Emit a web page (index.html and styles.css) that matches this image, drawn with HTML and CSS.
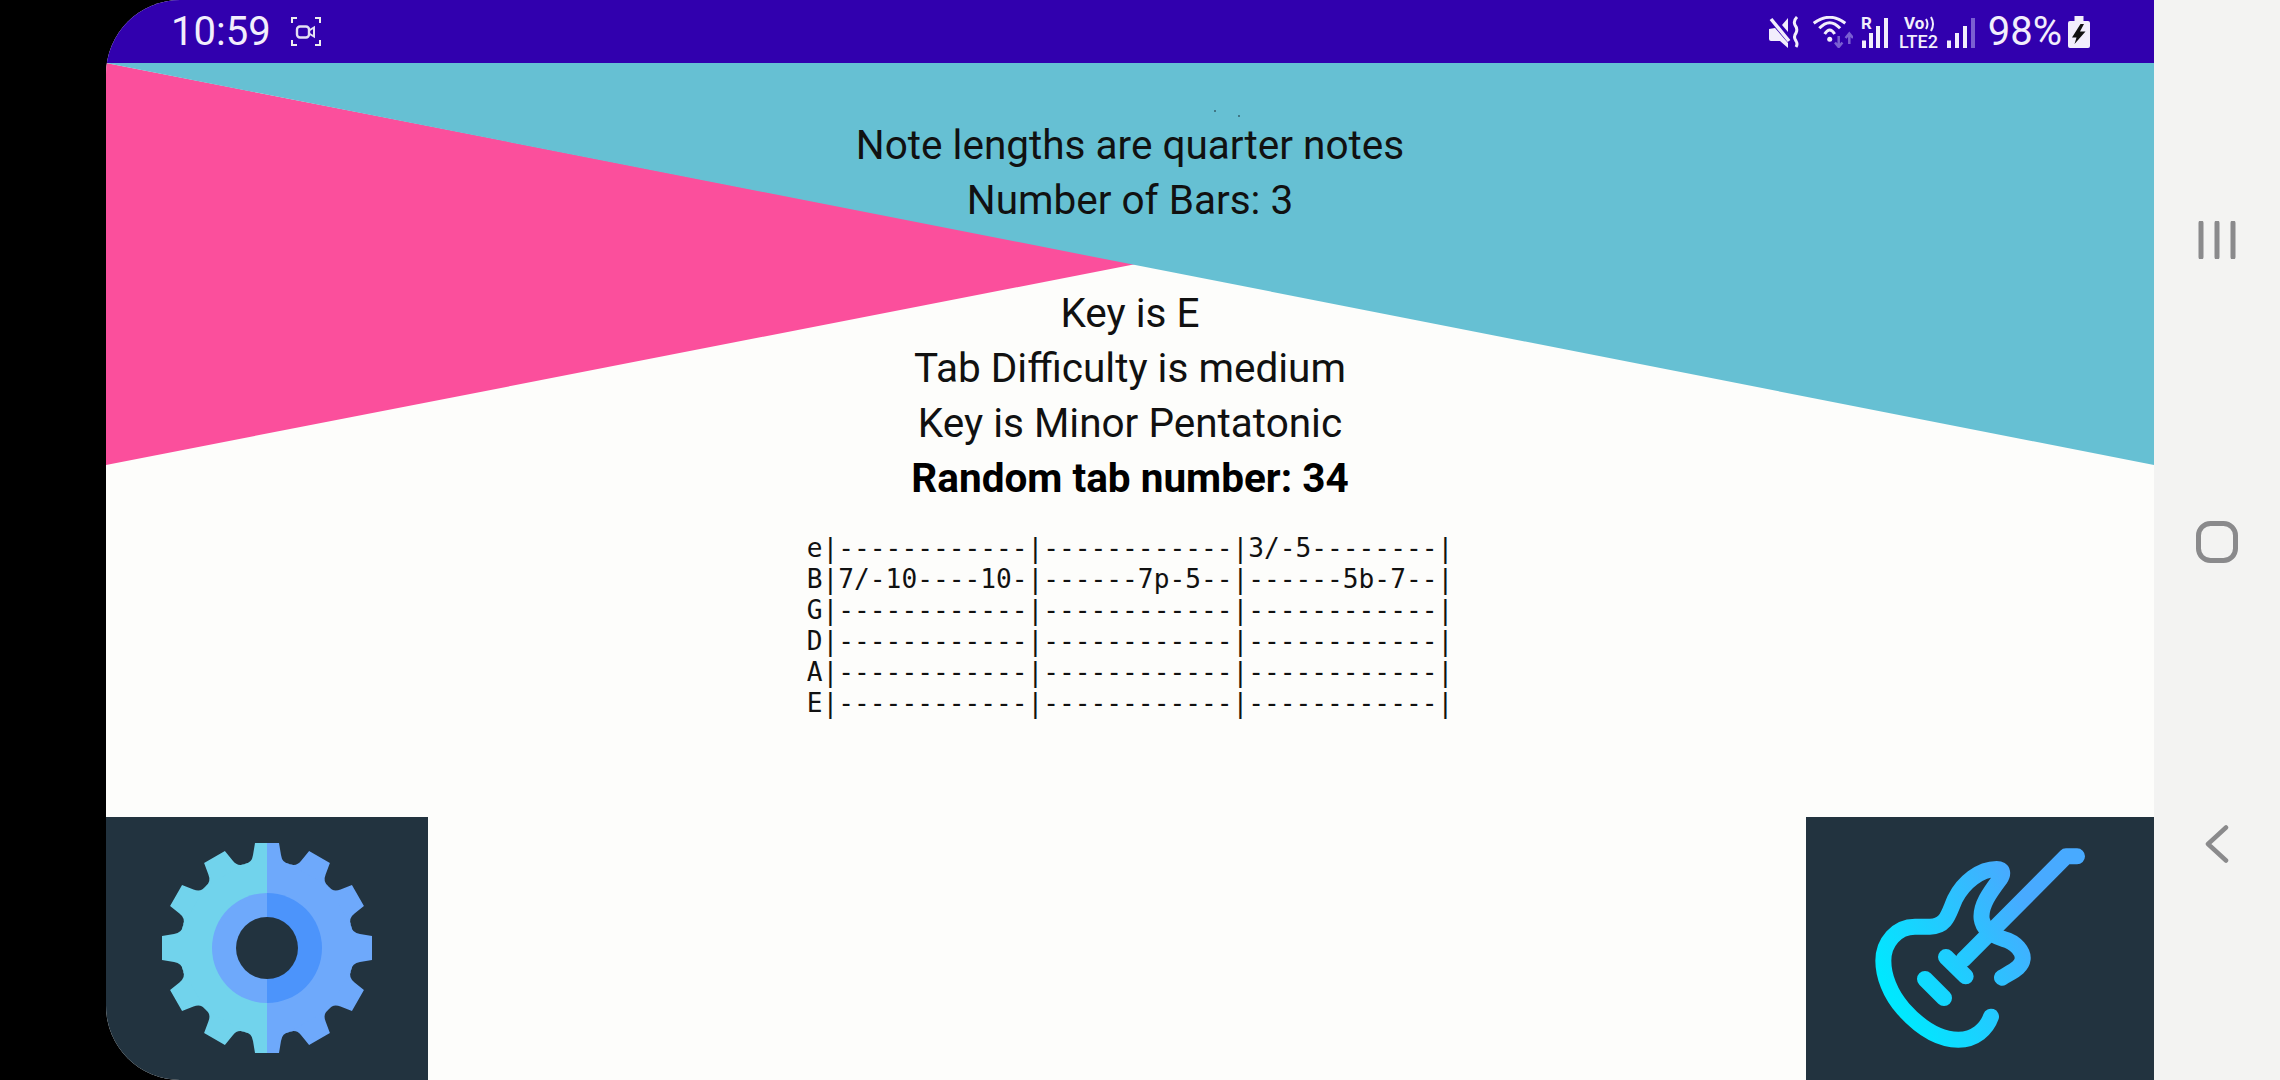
FILE: index.html
```html
<!DOCTYPE html>
<html lang="en">
<head>
    <meta charset="UTF-8">
    <meta name="viewport" content="width=device-width, initial-scale=1.0">
    <title>Random Tab</title>
    <link rel="stylesheet" href="styles.css">
</head>
<body>
    <div class="screen">
        <div class="status-bar">
            <div class="status-left">
                <span class="clock">10:59</span>
                <svg class="icon-record" width="30" height="29" viewBox="0 0 30 29">
                    <path d="M1 6V1H6M24 1H29V6M29 23V28H24M6 28H1V23" fill="none" stroke="#eee" stroke-width="2"/>
                    <rect x="6" y="9.500" width="12" height="11" rx="3" fill="none" stroke="#e4e0f4" stroke-width="2.400"/>
                    <path d="M18 13.500L23 10.500V19.500L18 16.500" fill="none" stroke="#e4e0f4" stroke-width="2"/>
                </svg>
            </div>
            <div class="status-right">
                <svg width="31" height="32" viewBox="0 0 31 32">
                    <path d="M1 13L7 12L20 27V32L12 25H3Q1 25 1 23Z" fill="#f2eefc"/>
                    <path d="M14 9L20 2V16Z" fill="#f2eefc"/>
                    <path d="M3 3L21 25" stroke="#f2eefc" stroke-width="3.500"/>
                    <path d="M29 1Q25 5 27 9Q30 13 28 17Q25 21 28 25Q30 28 28 31" fill="none" stroke="#f2eefc" stroke-width="3"/>
                </svg>
                <svg class="gap-wide" width="41" height="32" viewBox="0 0 41 32">
                    <path d="M1.700 7.300Q17.700 -4.700 33.300 7.300" fill="none" stroke="#f2eefc" stroke-width="3"/>
                    <path d="M7.300 12.300Q17.700 1.100 28.100 12.300" fill="none" stroke="#f2eefc" stroke-width="3"/>
                    <path d="M12.700 18Q17.700 10 22.700 18" fill="none" stroke="#f2eefc" stroke-width="3"/>
                    <circle cx="17.700" cy="23.300" r="2.500" fill="#f2eefc"/>
                    <path d="M26.700 20V30.500M23 26.500L26.700 31L30.400 26.500M37.300 28V18.500M33.600 22L37.300 17.500L41 22" fill="none" stroke="#7a5fd2" stroke-width="2.500"/>
                </svg>
                <svg class="net-icon" width="30" height="44" viewBox="0 -6 30 44">
                    <text class="net-label" x="0" y="13">R</text>
                    <rect x="1" y="24.500" width="4" height="7.500" fill="#f2eefc"/>
                    <rect x="8" y="17" width="4" height="15" fill="#f2eefc"/>
                    <rect x="15" y="10" width="4" height="22" fill="#f2eefc"/>
                    <rect x="23" y="2" width="4" height="30" fill="#f2eefc"/>
                </svg>
                <svg class="net-icon" width="40" height="44" viewBox="0 -6 40 44">
                    <text class="net-label" x="5" y="13">Vo</text>
                    <path d="M27 3Q30 8 27 13M32 1Q36 8 32 15" fill="none" stroke="#f2eefc" stroke-width="2"/>
                    <text class="net-label net-label-lte" x="0" y="32">LTE2</text>
                </svg>
                <svg width="28" height="32" viewBox="0 0 28 32">
                    <rect x="0" y="24.500" width="4" height="7.500" fill="#f2eefc"/>
                    <rect x="8" y="17" width="4" height="15" fill="#f2eefc"/>
                    <rect x="16" y="10" width="4" height="22" fill="#f2eefc"/>
                    <rect x="24" y="2" width="4" height="30" fill="#7a5fd2"/>
                </svg>
                <span class="battery-text">98%</span>
                <svg class="battery-icon" width="22" height="32" viewBox="0 0 22 32">
                    <path d="M6.500 0H15.500V5H20Q22 5 22 7V30Q22 32 20 32H2Q0 32 0 30V7Q0 5 2 5H6.500Z" fill="#f2eefc"/>
                    <path d="M12.500 8L4 21.500H8.500L6.500 28L17.500 15.500H12L16 8Z" fill="#111"/>
                </svg>
            </div>
        </div>

        <div class="content">
            <svg class="backdrop" width="2048" height="402" viewBox="0 0 2048 402">
                <polygon points="0,0 1030,201 0,402" fill="#fb4f9c"/>
                <polygon points="0,0 2048,0 2048,402" fill="#66c0d3"/>
                <circle cx="1109" cy="48" r="1" fill="#35606c"/>
                <circle cx="1133" cy="53" r="1" fill="#35606c"/>
            </svg>

            <div class="info">
                <p>Note lengths are quarter notes</p>
                <p>Number of Bars: 3</p>
                <p class="info-gap">Key is E</p>
                <p>Tab Difficulty is medium</p>
                <p>Key is Minor Pentatonic</p>
                <p class="info-bold">Random tab number: 34</p>
            </div>

            <pre class="tab">e|------------|------------|3/-5--------|
B|7/-10----10-|------7p-5--|------5b-7--|
G|------------|------------|------------|
D|------------|------------|------------|
A|------------|------------|------------|
E|------------|------------|------------|</pre>

            <div class="buttons">
                <button type="button" class="btn btn-settings">
                    <svg width="322" height="263" viewBox="-161 -131 322 263">
                        <defs>
                            <g id="cog">
                                <circle r="87"/>
                                <path id="tooth" d="M-12 -105H12L14 -93Q15 -85 22.500 -84L-22.500 -84Q-15 -85 -14 -93Z"/>
                                <use href="#tooth" transform="rotate(30)"/>
                                <use href="#tooth" transform="rotate(60)"/>
                                <use href="#tooth" transform="rotate(90)"/>
                                <use href="#tooth" transform="rotate(120)"/>
                                <use href="#tooth" transform="rotate(150)"/>
                                <use href="#tooth" transform="rotate(180)"/>
                                <use href="#tooth" transform="rotate(210)"/>
                                <use href="#tooth" transform="rotate(240)"/>
                                <use href="#tooth" transform="rotate(270)"/>
                                <use href="#tooth" transform="rotate(300)"/>
                                <use href="#tooth" transform="rotate(330)"/>
                            </g>
                            <clipPath id="left-half"><rect x="-120" y="-120" width="120" height="240"/></clipPath>
                            <clipPath id="right-half"><rect x="0" y="-120" width="120" height="240"/></clipPath>
                        </defs>
                        <use href="#cog" fill="#71d3ec" clip-path="url(#left-half)"/>
                        <use href="#cog" fill="#6ea9fb" clip-path="url(#right-half)"/>
                        <circle r="55" fill="#6ea9fb" clip-path="url(#left-half)"/>
                        <circle r="55" fill="#4c94fb" clip-path="url(#right-half)"/>
                        <circle r="31" fill="#22333f"/>
                    </svg>
                </button>
                <button type="button" class="btn btn-guitar">
                    <svg width="348" height="263" viewBox="48 54 1044 789">
                        <defs>
                            <linearGradient id="guitar-grad" gradientUnits="userSpaceOnUse" x1="290" y1="560" x2="720" y2="330">
                                <stop offset="0" stop-color="#00e8ff"/>
                                <stop offset="1" stop-color="#48aaff"/>
                            </linearGradient>
                        </defs>
                        <g fill="none" stroke="url(#guitar-grad)" stroke-width="48" stroke-linecap="round" stroke-linejoin="round">
                            <path d="M861 172H828L520 482"/>
                            <path d="M468 474L527 532"/>
                            <path d="M405 540L462 597"/>
                            <path d="M603 653C590 690 555 722 505 722C440 722 385 680 340 630C300 585 280 530 280 485C280 430 320 383 375 383L420 383C470 383 475 345 495 300C520 250 570 210 620 210C640 210 640 225 630 240C600 280 570 320 575 360C580 395 610 410 640 420C680 430 700 460 698 480C695 505 670 515 636 536"/>
                        </g>
                    </svg>
                </button>
            </div>
        </div>
    </div>

    <div class="nav-bar">
        <svg width="38" height="38" viewBox="0 0 38 38">
            <path d="M3 2V36M19 2V36M35 2V36" stroke="#8a8a8c" stroke-width="5" stroke-linecap="round"/>
        </svg>
        <svg width="42" height="42" viewBox="0 0 42 42">
            <rect x="2.500" y="2.500" width="37" height="37" rx="12" fill="none" stroke="#8a8a8c" stroke-width="5"/>
        </svg>
        <svg width="24" height="38" viewBox="0 0 24 38">
            <path d="M21 2.500L3 19L21 35.500" fill="none" stroke="#8a8a8c" stroke-width="4.500" stroke-linecap="round" stroke-linejoin="round"/>
        </svg>
    </div>
</body>
</html>
```

FILE: styles.css
```css
html, body {
    margin: 0;
    height: 100%;
}

body {
    display: flex;
    justify-content: flex-end;
    height: 1080px;
    overflow: hidden;
    background-color: #000;
    font-family: Roboto, "Liberation Sans", sans-serif;
}

.screen {
    display: flex;
    flex-direction: column;
    width: 2048px;
    border-radius: 74px 0 0 74px;
    overflow: hidden;
    background-color: #fdfdfb;
}

.status-bar {
    display: flex;
    justify-content: space-between;
    align-items: center;
    height: 63px;
    padding: 0 64px 0 65px;
    background-color: #3100ae;
    color: #f2eefc;
}

.status-left,
.status-right {
    display: flex;
    align-items: center;
}

.status-left {
    gap: 20px;
}

.status-right {
    gap: 8px;
}

.status-right .gap-wide {
    margin-left: 5px;
}

.clock,
.battery-text {
    font-size: 40px;
    line-height: 63px;
}

.battery-text {
    margin-left: 5px;
}

.battery-icon {
    margin-left: -2px;
}

.net-label {
    font-family: Roboto, sans-serif;
    font-size: 17px;
    font-weight: 700;
    fill: #f2eefc;
}

.net-label-lte {
    font-size: 18px;
    font-weight: 500;
}

.content {
    position: relative;
    flex: 1;
    display: flex;
    flex-direction: column;
}

.backdrop {
    position: absolute;
    top: 0;
    left: 0;
}

.info {
    position: relative;
    padding-top: 55px;
    text-align: center;
    font-size: 40.5px;
    line-height: 55px;
    color: #111;
}

.info p {
    margin: 0;
}

.info .info-gap {
    margin-top: 58px;
}

.info .info-bold {
    font-weight: 700;
    color: #000;
}

.tab {
    position: relative;
    margin: 27px 0 0;
    text-align: center;
    font-family: "DejaVu Sans Mono", "Liberation Mono", monospace;
    font-size: 26.2px;
    line-height: 31px;
    color: #111;
}

.buttons {
    display: flex;
    justify-content: space-between;
    margin-top: auto;
}

.btn {
    display: block;
    height: 263px;
    padding: 0;
    border: none;
    background-color: #22333f;
}

.btn svg {
    display: block;
}

.nav-bar {
    display: flex;
    flex-direction: column;
    align-items: center;
    gap: 262px;
    width: 126px;
    padding-top: 221px;
    box-sizing: border-box;
    background-color: #f3f3f2;
}
```
